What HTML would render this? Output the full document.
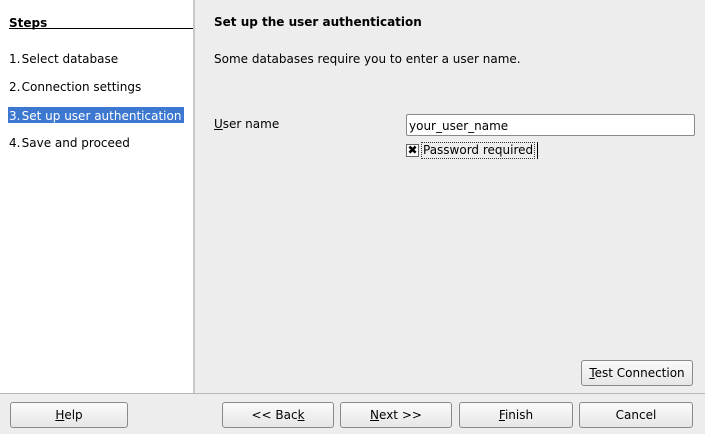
<!DOCTYPE html>
<html><head><style>
body{margin:0;width:705px;height:434px;background:#ededed;font-family:"DejaVu Sans","Liberation Sans",sans-serif;font-size:12px;color:#000;position:relative;overflow:hidden}
div,span{position:absolute;white-space:nowrap}
.left{left:0;top:0;width:193px;height:393px;background:#fff;border-right:2px solid #c8c8c8}
.hsep{left:0;top:393px;width:705px;height:1px;background:#b8b8b8}
.btn{height:24px;border:1px solid #8a8a8a;border-radius:3px;background:linear-gradient(#fafafa,#e6e6e6);text-align:center;line-height:25px}
.t{line-height:16px}
u{text-decoration:underline}
</style></head><body>
<div class="left"></div>
<div class="t" style="left:9px;top:15px;font-weight:bold;text-decoration:underline">Steps</div>
<div style="left:9px;top:28px;width:184px;height:1px;background:#000"></div>
<div class="t" style="left:9px;top:51px">1.&#8202;Select database</div>
<div class="t" style="left:9px;top:79px">2.&#8202;Connection settings</div>
<div class="t" style="left:8px;top:107px;width:176px;height:16px;background:#3c78d0"></div>
<div class="t" style="left:9px;top:108px;color:#fff">3.&#8202;Set up user authentication</div>
<div class="t" style="left:9px;top:135px">4.&#8202;Save and proceed</div>
<div class="hsep"></div>
<div class="t" style="left:214px;top:14px;font-weight:bold">Set up the user authentication</div>
<div class="t" style="left:214px;top:51px">Some databases require you to enter a user name.</div>
<div class="t" style="left:214px;top:116px"><u>U</u>ser name</div>
<div style="left:406px;top:114px;width:287px;height:20px;background:#fff;border:1px solid #8a8a8a;border-radius:2px"></div>
<div class="t" style="left:409px;top:118px">your_user_name</div>
<div style="left:406px;top:144px;width:11px;height:11px;background:#fff;border:1px solid #666;font-size:12px;line-height:11px;text-align:center;font-weight:bold">✖</div>
<div class="t" style="left:421px;top:142px;border:1px dotted #333;padding:0 1px;line-height:15px">Password required</div>
<div style="left:537px;top:142px;width:1px;height:17px;background:#000"></div>
<div class="btn" style="left:581px;top:360px;width:110px"><u>T</u>est Connection</div>
<div class="btn" style="left:10px;top:402px;width:116px"><u>H</u>elp</div>
<div class="btn" style="left:222px;top:402px;width:110px">&lt;&lt; Bac<u>k</u></div>
<div class="btn" style="left:340px;top:402px;width:110px"><u>N</u>ext &gt;&gt;</div>
<div class="btn" style="left:459px;top:402px;width:112px"><u>F</u>inish</div>
<div class="btn" style="left:579px;top:402px;width:112px">Cancel</div>
</body></html>
